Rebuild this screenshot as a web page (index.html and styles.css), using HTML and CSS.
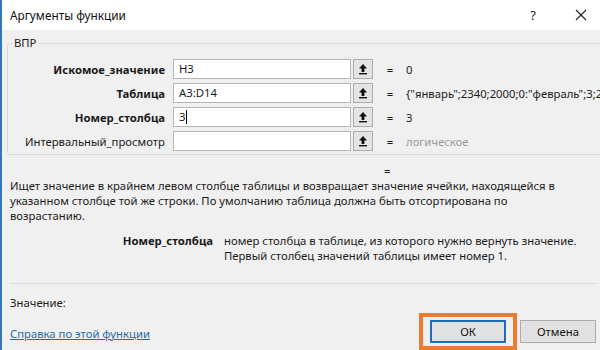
FILE: index.html
```html
<!DOCTYPE html>
<html lang="ru">
<head>
    <meta charset="UTF-8">
    <title>Аргументы функции</title>
    <link rel="stylesheet" href="styles.css">
</head>
<body>
    <div class="window">
        <div class="titlebar">
            <span class="title">Аргументы функции</span>
            <span class="help">?</span>
            <svg class="close" width="12" height="12" viewBox="0 0 12 12">
                <path d="M1 1L11 11M11 1L1 11" stroke="#222" stroke-width="1.1"/>
            </svg>
        </div>

        <div class="content">
            <fieldset class="group">
                <legend>ВПР</legend>
                <div class="args">
                    <div class="arg">
                        <label class="bold">Искомое_значение</label>
                        <div class="field">H3</div>
                        <button class="ref"><svg width="10" height="12" viewBox="0 0 10 12"><path d="M5 1L1 5.5H3.6V9H6.4V5.5H9Z" fill="#111"/><rect x="1" y="10" width="8" height="1.4" fill="#111"/></svg></button>
                        <span class="eq">=</span>
                        <span class="val">0</span>
                    </div>
                    <div class="arg">
                        <label class="bold">Таблица</label>
                        <div class="field">A3:D14</div>
                        <button class="ref"><svg width="10" height="12" viewBox="0 0 10 12"><path d="M5 1L1 5.5H3.6V9H6.4V5.5H9Z" fill="#111"/><rect x="1" y="10" width="8" height="1.4" fill="#111"/></svg></button>
                        <span class="eq">=</span>
                        <span class="val">{"январь";2340;2000;0:"февраль";3;2</span>
                    </div>
                    <div class="arg">
                        <label class="bold">Номер_столбца</label>
                        <div class="field">3<span class="caret"></span></div>
                        <button class="ref"><svg width="10" height="12" viewBox="0 0 10 12"><path d="M5 1L1 5.5H3.6V9H6.4V5.5H9Z" fill="#111"/><rect x="1" y="10" width="8" height="1.4" fill="#111"/></svg></button>
                        <span class="eq">=</span>
                        <span class="val">3</span>
                    </div>
                    <div class="arg">
                        <label>Интервальный_просмотр</label>
                        <div class="field"></div>
                        <button class="ref"><svg width="10" height="12" viewBox="0 0 10 12"><path d="M5 1L1 5.5H3.6V9H6.4V5.5H9Z" fill="#111"/><rect x="1" y="10" width="8" height="1.4" fill="#111"/></svg></button>
                        <span class="eq">=</span>
                        <span class="val muted">логическое</span>
                    </div>
                </div>
            </fieldset>

            <div class="result-eq">=</div>

            <p class="desc">Ищет значение в крайнем левом столбце таблицы и возвращает значение ячейки, находящейся в указанном столбце той же строки. По умолчанию таблица должна быть отсортирована по возрастанию.</p>

            <div class="arg-help">
                <span class="bold">Номер_столбца</span>
                <span class="arg-text">номер столбца в таблице, из которого нужно вернуть значение.<br>Первый столбец значений таблицы имеет номер 1.</span>
            </div>

            <hr class="sep">

            <div class="footer">
                <div class="footer-left">
                    <div>Значение:</div>
                    <a href="#" class="link">Справка по этой функции</a>
                </div>
                <div class="buttons">
                    <div class="highlight"><button class="btn primary">ОК</button></div>
                    <button class="btn">Отмена</button>
                </div>
            </div>
        </div>
    </div>
</body>
</html>
```

FILE: styles.css
```css
html, body {
    margin: 0;
    padding: 0;
}
body {
    font-family: "Noto Sans", "Open Sans", sans-serif;
    font-size: 11.3px;
    line-height: 15px;
    color: #1a1a1a;
    background: #f0f0f0;
}
.window {
    width: 598px;
    height: 350px;
    border-left: 2px solid #2f78c0;
    overflow: hidden;
}
.titlebar {
    height: 30px;
    background: #fff;
    display: flex;
    align-items: center;
    padding: 0 13px 0 8px;
}
.title {
    flex: 1;
    font-size: 11.8px;
    color: #111;
}
.help {
    font-size: 13px;
    margin-right: 39px;
    color: #222;
}
.content {
    padding: 0 4px 0 5px;
}
.group {
    box-sizing: border-box;
    margin: 5px 0 0;
    padding: 0;
    border: 1px solid #dadada;
    border-radius: 3px;
    height: 120px;
    overflow: hidden;
}
.group legend {
    padding: 0 2px;
    margin-left: 4px;
    line-height: 16px;
}
.args {
    display: flex;
    flex-direction: column;
    gap: 4px;
    margin-top: 8px;
}
.arg {
    display: flex;
    align-items: center;
    height: 20px;
}
.arg label {
    width: 157px;
    text-align: right;
    margin-right: 8px;
    white-space: nowrap;
}
.bold {
    font-weight: bold;
}
.field {
    width: 171px;
    height: 18px;
    border: 1px solid #b5b5b5;
    background: #fff;
    padding-left: 5px;
    line-height: 18px;
    display: flex;
    align-items: center;
}
.caret {
    display: inline-block;
    width: 1px;
    height: 14px;
    background: #000;
    margin-left: 1px;
}
.ref {
    width: 20px;
    height: 20px;
    margin-left: 2px;
    padding: 0;
    border: 1px solid #adadad;
    background: #e4e4e4;
    display: flex;
    align-items: center;
    justify-content: center;
}
.eq {
    width: 30px;
    text-align: center;
    margin-left: 2px;
}
.val {
    white-space: nowrap;
    margin-left: 1px;
}
.muted {
    color: #9a9a9a;
}
.result-eq {
    margin: 8px 0 0 377px;
    height: 15px;
}
.desc {
    margin: 0 0 0 3px;
    width: 575px;
}
.arg-help {
    display: flex;
    gap: 11px;
    margin-top: 10px;
}
.arg-help .bold {
    width: 206px;
    text-align: right;
    flex-shrink: 0;
}
.arg-text {
    white-space: nowrap;
}
.sep {
    border: none;
    border-top: 1px solid #dcdcdc;
    margin: 20px 0 0 3px;
}
.footer {
    display: flex;
    justify-content: space-between;
    padding-left: 3px;
}
.footer-left {
    display: flex;
    flex-direction: column;
    gap: 16px;
    padding-top: 11px;
}
.link {
    color: #1e6ea8;
    text-decoration: underline;
}
.buttons {
    display: flex;
    align-items: flex-start;
    gap: 3px;
    padding-top: 36px;
}
.highlight {
    border: 4px solid #ec7c30;
    padding: 3px 7px;
    margin: -7px 0 0;
    display: flex;
}
.btn {
    width: 76px;
    height: 23px;
    font-family: inherit;
    font-size: 11.3px;
    color: #111;
    background: #e1e1e1;
    border: 1px solid #adadad;
    padding: 0;
}
.btn.primary {
    border: 2px solid #1f6db5;
}
```
